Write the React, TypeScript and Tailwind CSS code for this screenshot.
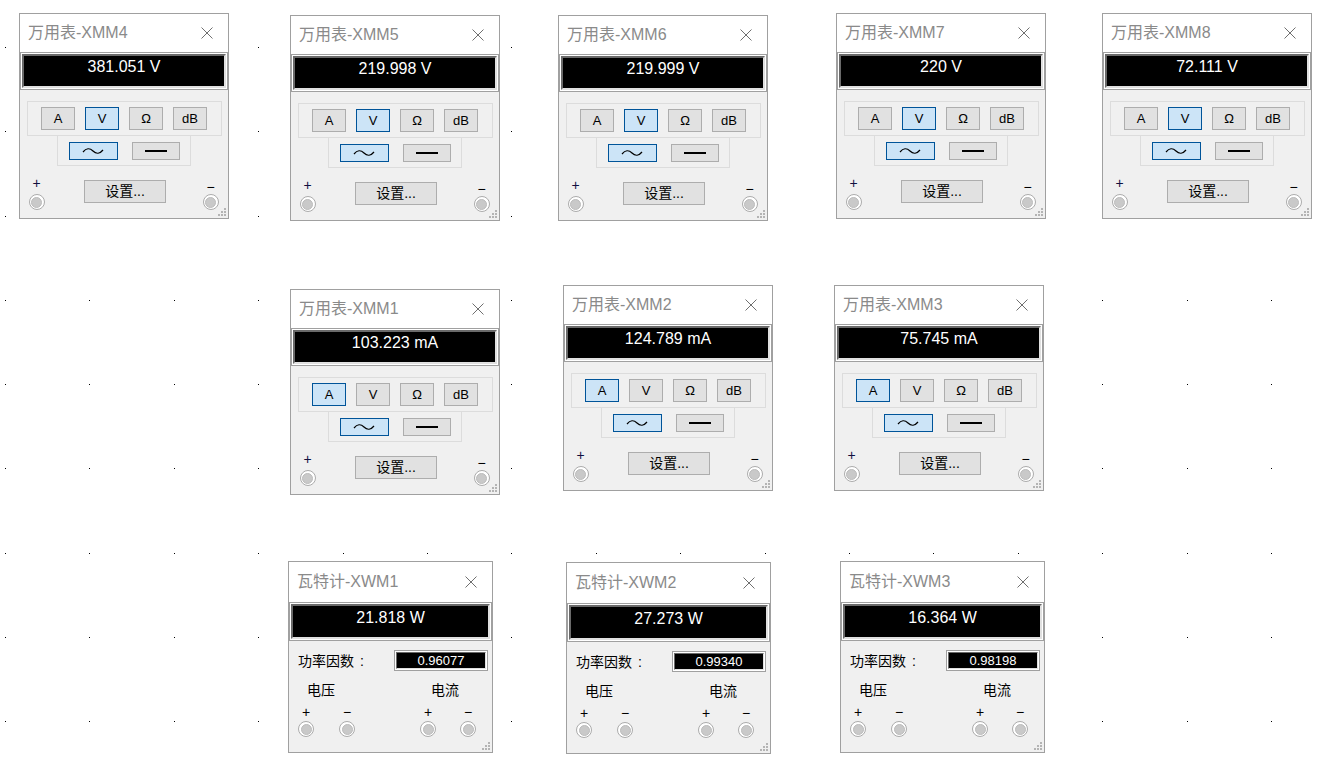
import React from "react";

const FONT = "font-['Liberation_Sans','Noto_Sans_CJK_SC',sans-serif]";

type Meter = { x: number; y: number; name: string; value: string; mode: "A" | "V" };
type Watt = { x: number; y: number; name: string; value: string; pf: string };

const meters: Meter[] = [
  { x: 19, y: 13, name: "万用表-XMM4", value: "381.051 V", mode: "V" },
  { x: 290, y: 15, name: "万用表-XMM5", value: "219.998 V", mode: "V" },
  { x: 558, y: 15, name: "万用表-XMM6", value: "219.999 V", mode: "V" },
  { x: 836, y: 13, name: "万用表-XMM7", value: "220 V", mode: "V" },
  { x: 1102, y: 13, name: "万用表-XMM8", value: "72.111 V", mode: "V" },
  { x: 290, y: 289, name: "万用表-XMM1", value: "103.223 mA", mode: "A" },
  { x: 563, y: 285, name: "万用表-XMM2", value: "124.789 mA", mode: "A" },
  { x: 834, y: 285, name: "万用表-XMM3", value: "75.745 mA", mode: "A" },
];

const watts: Watt[] = [
  { x: 288, y: 561, name: "瓦特计-XWM1", value: "21.818 W", pf: "0.96077" },
  { x: 566, y: 562, name: "瓦特计-XWM2", value: "27.273 W", pf: "0.99340" },
  { x: 840, y: 561, name: "瓦特计-XWM3", value: "16.364 W", pf: "0.98198" },
];

function CloseX() {
  return (
    <svg width="12" height="12" viewBox="0 0 12 12" className="shrink-0">
      <path d="M0.5 0.5 L11.5 11.5 M11.5 0.5 L0.5 11.5" stroke="#6f6f6f" strokeWidth="1" fill="none" />
    </svg>
  );
}

function Grip() {
  return (
    <svg width="10" height="10" viewBox="0 0 10 10" className="absolute right-[1px] bottom-[1px]">
      {[
        [7, 1],
        [4, 4],
        [7, 4],
        [1, 7],
        [4, 7],
        [7, 7],
      ].map(([x, y], i) => (
        <rect key={i} x={x} y={y} width="2" height="2" fill="#b4b4b4" />
      ))}
    </svg>
  );
}

function Terminal() {
  return (
    <div className="w-[16px] h-[16px] rounded-full border border-[#ababab] bg-white flex items-center justify-center">
      <div className="w-[11px] h-[11px] rounded-full bg-[#c9c9c9] border border-[#bcbcbc]" />
    </div>
  );
}

function Display({ value, h }: { value: string; h: string }) {
  return (
    <div className={`${h} border border-[#a0a0a0] bg-white p-[1px] flex`}>
      <div className="flex-1 border-2 border-t-[#6a6a6a] border-l-[#6a6a6a] border-b-[#e0e0e0] border-r-[#e0e0e0] bg-black flex items-center justify-center pb-[8px]">
        <span className="text-white text-[16px] leading-none">{value}</span>
      </div>
    </div>
  );
}

function TitleBar({ name, h }: { name: string; h: string }) {
  return (
    <div className={`${h} bg-white flex items-center pl-[8px] pr-[15px] justify-between`}>
      <span className="text-[16px] text-[#8a8a8a] leading-none">{name}</span>
      <CloseX />
    </div>
  );
}

function Btn({ label, active }: { label: string; active: boolean }) {
  return (
    <div
      className={`w-[34px] h-[23px] border flex items-center justify-center text-[13px] text-black ${
        active ? "bg-[#cce4f7] border-[#005499]" : "bg-[#e1e1e1] border-[#adadad]"
      }`}
    >
      {label}
    </div>
  );
}

function MeterWin({ m }: { m: Meter }) {
  return (
    <div
      className="absolute w-[210px] h-[206px] border border-[#a0a0a0] bg-[#f0f0f0] flex flex-col"
      style={{ left: m.x, top: m.y }}
    >
      <TitleBar name={m.name} h="h-[38px]" />
      <Display value={m.value} h="h-[38px]" />
      <div className="flex-1 flex flex-col items-center pt-[11px]">
        <div className="w-[195px] h-[35px] border border-[#dcdcdc] flex items-center justify-center gap-[10px]">
          <Btn label="A" active={m.mode === "A"} />
          <Btn label="V" active={m.mode === "V"} />
          <Btn label="Ω" active={false} />
          <Btn label="dB" active={false} />
        </div>
        <div className="w-[134px] h-[30px] border border-t-0 border-[#dcdcdc] flex items-center justify-center gap-[14px]">
          <div className="w-[49px] h-[18px] border border-[#005499] bg-[#cce4f7] flex items-center justify-center">
            <svg width="22" height="8" viewBox="0 0 22 8">
              <path d="M1 5 Q6 -1 11 4 T21 3" stroke="#000" strokeWidth="1.2" fill="none" />
            </svg>
          </div>
          <div className="w-[48px] h-[18px] border border-[#adadad] bg-[#e1e1e1] flex items-center justify-center">
            <div className="w-[22px] h-[2px] bg-black" />
          </div>
        </div>
        <div className="mt-[14px] w-full flex items-start pl-[8px] pr-[9px]">
          <div className="w-[17px] flex flex-col items-center">
            <span className="-mt-[4px] h-[14px] leading-[14px] text-[14px] text-[#101040]">+</span>
            <div className="mt-[4px]">
              <Terminal />
            </div>
          </div>
          <div className="ml-[39px] w-[82px] h-[23px] border border-[#adadad] bg-[#e1e1e1] flex items-center justify-center text-[14px] text-black">
            设置...
          </div>
          <div className="ml-auto w-[17px] flex flex-col items-center">
            <span className="h-[14px] leading-[14px] text-[14px] text-black">−</span>
            <Terminal />
          </div>
        </div>
      </div>
      <Grip />
    </div>
  );
}

function SignTerm({ sign }: { sign: string }) {
  return (
    <div className="w-[16px] flex flex-col items-center">
      <span className="h-[14px] leading-[14px] text-[14px] text-black">{sign}</span>
      <div className="mt-[2px]">
        <Terminal />
      </div>
    </div>
  );
}

function WattWin({ w }: { w: Watt }) {
  return (
    <div
      className="absolute w-[205px] h-[192px] border border-[#a0a0a0] bg-[#f0f0f0] flex flex-col"
      style={{ left: w.x, top: w.y }}
    >
      <TitleBar name={w.name} h="h-[40px]" />
      <Display value={w.value} h="h-[39px]" />
      <div className="flex-1 flex flex-col px-[9px]">
        <div className="mt-[9px] h-[21px] flex items-center">
          <span className="text-[14px] text-black leading-none">功率因数</span>
          <span className="ml-[6px] text-[14px] text-black leading-none">:</span>
          <div className="ml-auto -mr-[5px] w-[94px] h-[21px] border border-[#a0a0a0] bg-white p-[1px] flex">
            <div className="flex-1 border border-t-[#6a6a6a] border-l-[#6a6a6a] border-b-[#e0e0e0] border-r-[#e0e0e0] bg-black flex items-center justify-center">
              <span className="text-white text-[13px] leading-none">{w.pf}</span>
            </div>
          </div>
        </div>
        <div className="mt-[9px] h-[20px] flex text-[14px] leading-[20px] text-black">
          <span className="ml-[9px]">电压</span>
          <span className="ml-[96px]">电流</span>
        </div>
        <div className="mt-[5px] flex">
          <SignTerm sign="+" />
          <div className="ml-[25px]">
            <SignTerm sign="−" />
          </div>
          <div className="ml-[65px]">
            <SignTerm sign="+" />
          </div>
          <div className="ml-[24px]">
            <SignTerm sign="−" />
          </div>
        </div>
      </div>
      <Grip />
    </div>
  );
}

function GridDots() {
  const xs = Array.from({ length: 16 }, (_, i) => Math.round(5 + i * 84.4));
  const ys = Array.from({ length: 9 }, (_, j) => Math.round(47 + j * 84.25));
  return (
    <svg width="1332" height="759" className="absolute left-0 top-0">
      {xs.map((x) =>
        ys.map((y) => <rect key={`${x}-${y}`} x={x} y={y} width="1" height="1" fill="#000" />)
      )}
    </svg>
  );
}

export default function App() {
  return (
    <div className={`relative w-[1332px] h-[759px] bg-white overflow-hidden ${FONT}`}>
      <GridDots />
      {meters.map((m) => (
        <MeterWin key={m.name} m={m} />
      ))}
      {watts.map((w) => (
        <WattWin key={w.name} w={w} />
      ))}
    </div>
  );
}
